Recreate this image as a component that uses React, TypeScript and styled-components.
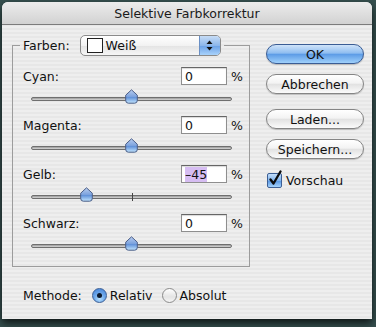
import React from 'react';
import styled, { createGlobalStyle } from 'styled-components';

const GlobalStyle = createGlobalStyle`
  html, body {
    margin: 0;
    padding: 0;
    background: #36504f;
  }
  body {
    width: 376px;
    height: 327px;
    overflow: hidden;
    font-family: "DejaVu Sans", "Liberation Sans", sans-serif;
    font-size: 12.5px;
    color: #111;
  }
`;

const Window = styled.div`
  width: 370px;
  height: 317px;
  margin: 2px 0 0 2px;
  border-radius: 6px 6px 0 0;
  overflow: hidden;
  background: repeating-linear-gradient(
    to bottom,
    #eeeeee 0px,
    #eeeeee 2px,
    #e7e7e7 2px,
    #e7e7e7 4px
  );
  box-shadow: 0 4px 9px rgba(0, 0, 0, 0.75);
  display: flex;
  flex-direction: column;
`;

const TitleBar = styled.div`
  height: 22px;
  flex: none;
  display: flex;
  align-items: center;
  justify-content: center;
  background: linear-gradient(to bottom, #ececec, #d2d2d2);
  border-bottom: 1px solid #7c7c7c;
  font-size: 12.5px;
  color: #1a1a1a;
`;

const Body = styled.div`
  display: flex;
  padding: 10px 0 0 10px;
`;

const LeftColumn = styled.div`
  width: 238px;
  display: flex;
  flex-direction: column;
`;

const GroupBox = styled.fieldset`
  margin: 0;
  padding: 10px 0 4px 10px;
  border: 1px solid #9c9c9c;
  min-width: 0;
`;

const Legend = styled.legend`
  padding: 0 3px;
  margin-left: -3px;
  display: flex;
  align-items: center;
  gap: 10px;
  height: 21px;
`;

const Popup = styled.div`
  width: 139px;
  height: 19px;
  border: 1px solid #8a8a8a;
  border-radius: 5px;
  background: linear-gradient(to bottom, #ffffff 0%, #f2f2f2 50%, #e3e3e3 51%, #f6f6f6 100%);
  display: flex;
  align-items: center;
  overflow: hidden;
`;

const Swatch = styled.span<{ $color: string }>`
  width: 14px;
  height: 13px;
  margin-left: 6px;
  border: 1px solid #222;
  background: ${p => p.$color};
`;

const PopupText = styled.span`
  margin-left: 3px;
  flex: 1;
`;

const PopupArrows = styled.div`
  width: 20px;
  height: 100%;
  border-left: 1px solid #6a8fc4;
  background: linear-gradient(to bottom, #c6dcf6 0%, #8cb6ea 50%, #6aa0e6 51%, #a8d2fb 100%);
  display: flex;
  align-items: center;
  justify-content: center;
`;

const Block = styled.div`
  height: 49px;
  display: flex;
  flex-direction: column;
`;

const InputRow = styled.div`
  height: 20px;
  display: flex;
  align-items: center;
  padding-right: 9px;
`;

const Label = styled.span`
  flex: 1;
`;

const Field = styled.div`
  width: 41px;
  height: 16px;
  padding: 0 0 0 3px;
  border: 1px solid #8e8e8e;
  border-top-color: #666;
  background: #fff;
  box-shadow: inset 0 1px 1px rgba(0, 0, 0, 0.15);
  display: flex;
  align-items: center;
`;

const FieldText = styled.span<{ $selected?: boolean }>`
  background: ${p => (p.$selected ? '#d6bdf2' : 'transparent')};
  line-height: 15px;
`;

const Unit = styled.span`
  margin-left: 4px;
  width: 9px;
`;

const SliderRow = styled.div`
  height: 26px;
  display: flex;
  align-items: center;
  padding-left: 8px;
`;

const Track = styled.div`
  position: relative;
  width: 201px;
  height: 4px;
  border: 1px solid #6f6f6f;
  border-radius: 3px;
  background: linear-gradient(to bottom, #9a9a9a, #d8d8d8);
  box-sizing: border-box;
`;

const Tick = styled.div`
  position: absolute;
  left: 100px;
  top: -3px;
  width: 1px;
  height: 8px;
  background: #444;
`;

const Thumb = styled.svg`
  position: absolute;
  top: -9px;
  margin-left: -6.5px;
`;

const MethodRow = styled.div`
  display: flex;
  align-items: center;
  height: 18px;
  margin-top: 19px;
  padding-left: 11px;
`;

const MethodLabel = styled.span`
  margin-right: 10px;
`;

const RadioOption = styled.label`
  display: flex;
  align-items: center;
  gap: 3px;
  margin-right: 9px;
`;

const Radio = styled.span<{ $on?: boolean }>`
  width: 13px;
  height: 13px;
  border-radius: 50%;
  border: 1px solid ${p => (p.$on ? '#3c5f95' : '#8a8a8a')};
  background: ${p =>
    p.$on
      ? 'radial-gradient(circle at 50% 75%, #b8e2ff 0%, #6ea8ea 45%, #3f7fd8 100%)'
      : 'linear-gradient(to bottom, #ffffff, #e4e4e4 60%, #f5f5f5)'};
  display: flex;
  align-items: center;
  justify-content: center;
`;

const RadioDot = styled.span`
  width: 5px;
  height: 5px;
  border-radius: 50%;
  background: #0d1a2e;
`;

const RightColumn = styled.div`
  margin-left: 16px;
  padding-top: 9px;
  width: 98px;
  display: flex;
  flex-direction: column;
`;

const Button = styled.div<{ $primary?: boolean; $gap: number }>`
  height: 18px;
  margin-top: ${p => p.$gap}px;
  border-radius: 10px;
  border: 1px solid ${p => (p.$primary ? '#3a5c94' : '#858585')};
  background: ${p =>
    p.$primary
      ? 'linear-gradient(to bottom, #cfe3f9 0%, #8fbdf0 45%, #5d9ce6 52%, #9fd0fb 100%)'
      : 'linear-gradient(to bottom, #ffffff 0%, #f3f3f3 45%, #e2e2e2 52%, #fbfbfb 100%)'};
  box-shadow: 0 1px 1px rgba(0, 0, 0, 0.2);
  display: flex;
  align-items: center;
  justify-content: center;
  color: #111;
`;

const CheckRow = styled.label`
  display: flex;
  align-items: center;
  gap: 4px;
  margin-top: 14px;
  padding-left: 1px;
`;

const CheckBox = styled.span`
  width: 13px;
  height: 13px;
  border: 1px solid #3c5f95;
  border-radius: 2px;
  background: linear-gradient(to bottom, #c3defa 0%, #80b4ee 50%, #5a98e4 55%, #a4d2fb 100%);
  position: relative;
`;

const CheckMark = styled.svg`
  position: absolute;
  left: 0px;
  top: -4px;
`;

const channels = [
  { name: 'Cyan', value: 0 },
  { name: 'Magenta', value: 0 },
  { name: 'Gelb', value: -45, selected: true },
  { name: 'Schwarz', value: 0 },
];

const SliderThumb: React.FC<{ left: number }> = ({ left }) => (
  <Thumb width="13" height="15" viewBox="0 0 13 15" style={{ left }}>
    <defs>
      <linearGradient id="thumbGel" x1="0" y1="0" x2="0" y2="1">
        <stop offset="0" stopColor="#b8cdf0" />
        <stop offset="0.5" stopColor="#7da3de" />
        <stop offset="0.55" stopColor="#5e8fd8" />
        <stop offset="1" stopColor="#c4e6ff" />
      </linearGradient>
    </defs>
    <path
      d="M6.5 0.8 L12.3 6.2 V11.4 Q12.3 14.2 9.6 14.2 H3.4 Q0.7 14.2 0.7 11.4 V6.2 Z"
      fill="url(#thumbGel)"
      stroke="#4b5d86"
      strokeWidth="1"
    />
  </Thumb>
);

const App: React.FC = () => {
  return (
    <>
      <GlobalStyle />
      <Window>
        <TitleBar>Selektive Farbkorrektur</TitleBar>
        <Body>
          <LeftColumn>
            <GroupBox>
              <Legend>
                <span>Farben:</span>
                <Popup>
                  <Swatch $color="#ffffff" />
                  <PopupText>Weiß</PopupText>
                  <PopupArrows>
                    <svg width="7" height="11" viewBox="0 0 7 11">
                      <path d="M3.5 0.5 L6.5 4 H0.5 Z" fill="#111" />
                      <path d="M3.5 10.5 L6.5 7 H0.5 Z" fill="#111" />
                    </svg>
                  </PopupArrows>
                </Popup>
              </Legend>
              {channels.map(ch => (
                <Block key={ch.name}>
                  <InputRow>
                    <Label>{ch.name}:</Label>
                    <Field>
                      <FieldText $selected={ch.selected}>
                        {ch.value < 0 ? `–${Math.abs(ch.value)}` : ch.value}
                      </FieldText>
                    </Field>
                    <Unit>%</Unit>
                  </InputRow>
                  <SliderRow>
                    <Track>
                      <Tick />
                      <SliderThumb left={99 + ch.value} />
                    </Track>
                  </SliderRow>
                </Block>
              ))}
            </GroupBox>
            <MethodRow>
              <MethodLabel>Methode:</MethodLabel>
              <RadioOption>
                <Radio $on>
                  <RadioDot />
                </Radio>
                Relativ
              </RadioOption>
              <RadioOption>
                <Radio />
                Absolut
              </RadioOption>
            </MethodRow>
          </LeftColumn>
          <RightColumn>
            <Button $primary $gap={0}>OK</Button>
            <Button $gap={10}>Abbrechen</Button>
            <Button $gap={15}>Laden...</Button>
            <Button $gap={10}>Speichern...</Button>
            <CheckRow>
              <CheckBox>
                <CheckMark width="14" height="17" viewBox="0 0 14 17">
                  <path
                    d="M2.5 9.5 L5.5 13.5 L12.5 1.5"
                    fill="none"
                    stroke="#0c0c0c"
                    strokeWidth="2.3"
                    strokeLinecap="round"
                    strokeLinejoin="round"
                  />
                </CheckMark>
              </CheckBox>
              Vorschau
            </CheckRow>
          </RightColumn>
        </Body>
      </Window>
    </>
  );
};

export default App;
